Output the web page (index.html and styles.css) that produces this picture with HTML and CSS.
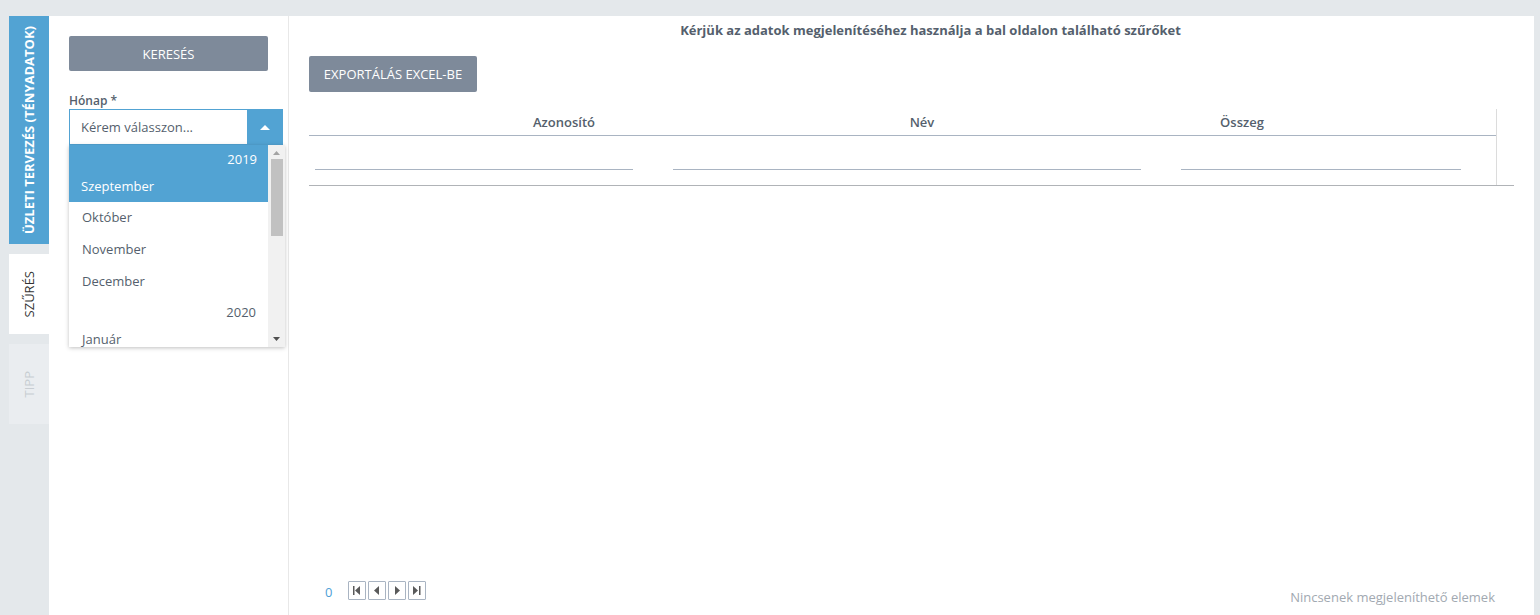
FILE: index.html
```html
<!DOCTYPE html>
<html lang="hu">
<head>
    <meta charset="UTF-8">
    <title>Üzleti tervezés</title>
    <link rel="stylesheet" href="styles.css">
</head>
<body>
    <div class="layout">
        <div class="tabs">
            <div class="tab tab-main"><span>ÜZLETI TERVEZÉS (TÉNYADATOK)</span></div>
            <div class="tab tab-active"><span>SZŰRÉS</span></div>
            <div class="tab tab-off"><span>TIPP</span></div>
        </div>

        <div class="filter">
            <button class="btn btn-search">KERESÉS</button>
            <label class="label">Hónap *</label>
            <div class="select">
                <div class="select-value">Kérem válasszon...</div>
                <div class="select-arrow">
                    <svg width="10" height="6" viewBox="0 0 10 6"><path d="M0 6 L5 1 L10 6 Z" fill="#fff"/></svg>
                </div>
            </div>
            <div class="popup">
                <ul class="list">
                    <li class="item selected"><div class="group">2019</div><div class="name">Szeptember</div></li>
                    <li class="item"><div class="name">Október</div></li>
                    <li class="item"><div class="name">November</div></li>
                    <li class="item"><div class="name">December</div></li>
                    <li class="item"><div class="group">2020</div><div class="name">Január</div></li>
                </ul>
                <div class="scrollbar">
                    <svg class="sb-arrow" width="7" height="4" viewBox="0 0 7 4"><path d="M0 4 L3.5 0 L7 4 Z" fill="#a3a3a3"/></svg>
                    <div class="sb-thumb"></div>
                    <svg class="sb-arrow sb-down" width="7" height="4" viewBox="0 0 7 4"><path d="M0 0 L3.5 4 L7 0 Z" fill="#505050"/></svg>
                </div>
            </div>
        </div>

        <div class="main">
            <div class="title">Kérjük az adatok megjelenítéséhez használja a bal oldalon található szűrőket</div>
            <button class="btn btn-export">EXPORTÁLÁS EXCEL-BE</button>

            <div class="grid">
                <div class="grid-body">
                    <div class="grid-head">
                        <div class="th">Azonosító</div>
                        <div class="th">Név</div>
                        <div class="th">Összeg</div>
                    </div>
                    <div class="grid-filter">
                        <div class="fcell"><div class="fline"></div></div>
                        <div class="fcell"><div class="fline"></div></div>
                        <div class="fcell"><div class="fline"></div></div>
                    </div>
                </div>
                <div class="grid-gutter"></div>
            </div>

            <div class="spacer"></div>

            <div class="pager">
                <span class="pager-num">0</span>
                <div class="pager-btns">
                    <span class="pbtn"><svg width="8" height="9" viewBox="0 0 8 9"><rect x="0" y="0" width="1.5" height="9" fill="#5a5a5a"/><path d="M7 0 L2 4.5 L7 9 Z" fill="#5a5a5a"/></svg></span>
                    <span class="pbtn"><svg width="6" height="9" viewBox="0 0 6 9"><path d="M5 0 L0 4.5 L5 9 Z" fill="#5a5a5a"/></svg></span>
                    <span class="pbtn"><svg width="6" height="9" viewBox="0 0 6 9"><path d="M1 0 L6 4.5 L1 9 Z" fill="#5a5a5a"/></svg></span>
                    <span class="pbtn"><svg width="8" height="9" viewBox="0 0 8 9"><path d="M0 0 L5 4.5 L0 9 Z" fill="#5a5a5a"/><rect x="6" y="0" width="1.5" height="9" fill="#5a5a5a"/></svg></span>
                </div>
                <span class="pager-info">Nincsenek megjeleníthető elemek</span>
            </div>
        </div>
    </div>
</body>
</html>
```

FILE: styles.css
```css
html, body {
    margin: 0;
    height: 100%;
}
body {
    font-family: 'Open Sans', sans-serif;
    font-size: 13px;
    color: #555f6d;
    background: #e4e8eb;
    overflow: hidden;
}
.layout {
    display: flex;
    height: 599px;
    padding: 16px 6px 0 9px;
}

/* left tabs */
.tabs {
    width: 40px;
    display: flex;
    flex-direction: column;
    gap: 10px;
}
.tab {
    display: flex;
    align-items: center;
    justify-content: center;
    height: 80px;
}
.tab span {
    writing-mode: vertical-rl;
    transform: rotate(180deg);
    white-space: nowrap;
    font-size: 13px;
}
.tab-main {
    height: 228px;
    background: #52a3d3;
    color: #fff;
}
.tab-main span {
    font-weight: 700;
}
.tab-active {
    background: #fff;
    color: #333;
}
.tab-off {
    background: #eaedf0;
    color: #c8cdd2;
}

/* filter panel */
.filter {
    position: relative;
    width: 199px;
    background: #fff;
    border-right: 1px solid #e8e8e8;
    padding: 20px 20px 0 20px;
}
.btn {
    display: block;
    border: none;
    border-radius: 2px;
    background: #7e8a9a;
    color: #fff;
    font-family: inherit;
    font-size: 13px;
    cursor: pointer;
}
.btn-search {
    width: 199px;
    height: 35px;
}
.label {
    display: block;
    margin-top: 22px;
    font-size: 12px;
    font-weight: 600;
    color: #555f6d;
    line-height: 16px;
}
.select {
    display: flex;
    width: 214px;
    height: 36px;
    box-sizing: border-box;
    border: 1px solid #52a3d3;
    background: #fff;
}
.select-value {
    flex: 1;
    padding-left: 11px;
    line-height: 34px;
    color: #555f6d;
}
.select-arrow {
    width: 35px;
    background: #52a3d3;
    display: flex;
    align-items: center;
    justify-content: center;
}
.popup {
    position: absolute;
    left: 20px;
    top: 129px;
    width: 216px;
    height: 202px;
    display: flex;
    background: #fff;
    box-shadow: 0 1px 4px rgba(0,0,0,0.25);
    overflow: hidden;
    z-index: 5;
}
.list {
    list-style: none;
    margin: 0;
    padding: 0;
    flex: 1;
}
.item {
    color: #555f6d;
}
.item .name {
    height: 32px;
    line-height: 30px;
    padding-left: 13px;
}
.item .group {
    height: 26px;
    line-height: 28px;
    text-align: right;
    padding-right: 12px;
}
.item.selected {
    background: #52a3d3;
    color: #fff;
}
.item.selected .name {
    height: 32px;
    line-height: 32px;
    padding-left: 12px;
}
.item.selected .group {
    height: 25px;
    padding-right: 11px;
}
.scrollbar {
    width: 17px;
    background: #f1f1f1;
    display: flex;
    flex-direction: column;
    align-items: center;
}
.sb-arrow {
    margin: 6px 0 4px;
}
.sb-thumb {
    width: 12px;
    height: 77px;
    background: #c1c1c1;
}
.sb-down {
    margin-top: auto;
    margin-bottom: 6px;
}

/* main panel */
.main {
    flex: 1;
    background: #fff;
    padding: 0 20px 0 20px;
    display: flex;
    flex-direction: column;
}
.title {
    text-align: center;
    font-weight: 700;
    color: #555f6d;
    padding: 5px 0 0 38px;
    line-height: 18px;
}
.btn-export {
    margin-top: 17px;
    width: 168px;
    height: 36px;
}
.grid {
    display: flex;
    margin-top: 17px;
    border-bottom: 1px solid #b0b3b7;
}
.grid-body {
    flex: 1;
    border-right: 1px solid #dcdcdc;
}
.grid-gutter {
    width: 17px;
}
.grid-head {
    display: grid;
    grid-template-columns: 510px 206px 434px 1fr;
    height: 26px;
    border-bottom: 1px solid #a9b4c2;
}
.th {
    text-align: center;
    line-height: 26px;
    font-weight: 600;
    color: #555f6d;
}
.grid-filter {
    display: grid;
    grid-template-columns: 344px 508px 320px 1fr;
    height: 49px;
}
.fcell {
    padding: 0 20px;
}
.fcell:first-child {
    padding-left: 6px;
}
.fline {
    margin-top: 33px;
    border-bottom: 1px solid #a9b4c2;
}
.spacer {
    flex: 1;
}
.pager {
    display: flex;
    align-items: center;
    height: 19px;
    margin-bottom: 15px;
    padding-right: 19px;
}
.pager-num {
    color: #4f9fd6;
    margin-left: 16px;
    margin-top: 3px;
    width: 23px;
}
.pager-btns {
    display: flex;
    gap: 2px;
}
.pbtn {
    width: 16px;
    height: 17px;
    border: 1px solid #a9b4c2;
    border-radius: 1px;
    display: flex;
    align-items: center;
    justify-content: center;
}
.pager-info {
    margin-left: auto;
    margin-top: 12px;
    color: #a2a9b1;
}
```
